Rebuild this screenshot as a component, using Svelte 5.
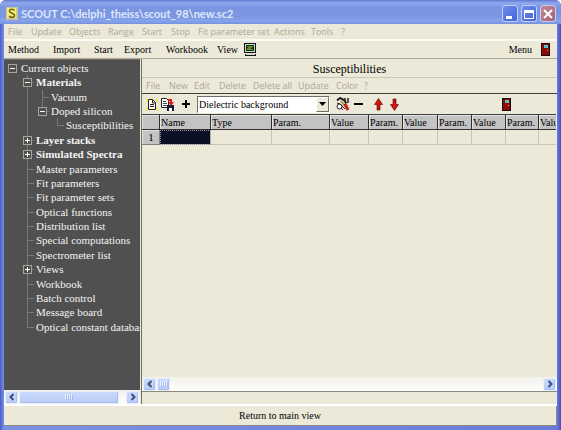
<script>
  const fullTitle = 'SCOUT C:\\delphi_theiss\\scout_98\\new.sc2';

  const menu = [
    { label: 'File', w: 23 },
    { label: 'Update', w: 38 },
    { label: 'Objects', w: 39 },
    { label: 'Range', w: 34 },
    { label: 'Start', w: 29 },
    { label: 'Stop', w: 27 },
    { label: 'Fit parameter set', w: 76 },
    { label: 'Actions', w: 37 },
    { label: 'Tools', w: 30 },
    { label: '?', w: 12 }
  ];
  const actions = [
    { label: 'Method', w: 45 },
    { label: 'Import', w: 41 },
    { label: 'Start', w: 30 },
    { label: 'Export', w: 42 },
    { label: 'Workbook', w: 51 },
    { label: 'View', w: 27 }
  ];
  const subMenu = [
    { label: 'File', w: 23 },
    { label: 'New', w: 25 },
    { label: 'Edit', w: 25 },
    { label: 'Delete', w: 34 },
    { label: 'Delete all', w: 45 },
    { label: 'Update', w: 38 },
    { label: 'Color', w: 28 },
    { label: '?', w: 12 }
  ];

  // one guide cell per level: line, tee, elbow or blank
  const tree = [
    { label: 'Current objects', guides: ['blank'], toggle: '-' },
    { label: 'Materials', guides: ['blank', 'tee'], toggle: '-', bold: true },
    { label: 'Vacuum', guides: ['blank', 'line', 'tee'] },
    { label: 'Doped silicon', guides: ['blank', 'line', 'elbow'], toggle: '-' },
    { label: 'Susceptibilities', guides: ['blank', 'line', 'blank', 'elbow'] },
    { label: 'Layer stacks', guides: ['blank', 'tee'], toggle: '+', bold: true },
    { label: 'Simulated Spectra', guides: ['blank', 'tee'], toggle: '+', bold: true },
    { label: 'Master parameters', guides: ['blank', 'tee'] },
    { label: 'Fit parameters', guides: ['blank', 'tee'] },
    { label: 'Fit parameter sets', guides: ['blank', 'tee'] },
    { label: 'Optical functions', guides: ['blank', 'tee'] },
    { label: 'Distribution list', guides: ['blank', 'tee'] },
    { label: 'Special computations', guides: ['blank', 'tee'] },
    { label: 'Spectrometer list', guides: ['blank', 'tee'] },
    { label: 'Views', guides: ['blank', 'tee'], toggle: '+' },
    { label: 'Workbook', guides: ['blank', 'tee'] },
    { label: 'Batch control', guides: ['blank', 'tee'] },
    { label: 'Message board', guides: ['blank', 'tee'] },
    { label: 'Optical constant database', guides: ['blank', 'elbow'] }
  ];

  const columns = [
    { label: 'Name', w: 51 },
    { label: 'Type', w: 61 },
    { label: 'Param.', w: 58 },
    { label: 'Value', w: 39 },
    { label: 'Param.', w: 34 },
    { label: 'Value', w: 35 },
    { label: 'Param.', w: 34 },
    { label: 'Value', w: 34 },
    { label: 'Param.', w: 33 },
    { label: 'Value', w: 34 }
  ];

  let kind = $state('Dielectric background');
</script>

{#snippet menuItems(items)}
  {#each items as item}
    <button disabled style="width: {item.w}px">{item.label}</button>
  {/each}
{/snippet}

{#snippet door()}
  <svg width="10" height="13" viewBox="0 0 10 13" shape-rendering="crispEdges">
    <path fill="#1a0808" d="M0 0h9v13H0z" />
    <path fill="#8e0808" d="M1 1h7v11H1z" />
    <path fill="#50c8c8" d="M3 2h4v3H3z" />
    <path fill="#e8a040" d="M6 7h1v1H6z" />
  </svg>
{/snippet}

{#snippet arrow(dir)}
  <svg width="8" height="8" viewBox="0 0 8 8">
    <path d={dir === 'left' ? 'M5.5 1 2.5 4l3 3' : 'M2.5 1l3 3-3 3'} fill="none" stroke="#3c4f7c" stroke-width="2" />
  </svg>
{/snippet}

{#snippet grip()}
  <svg width="8" height="6" viewBox="0 0 8 6" shape-rendering="crispEdges">
    <path fill="#eef4fe" d="M0 0h1v5H0zM2 0h1v5H2zM4 0h1v5H4zM6 0h1v5H6z" />
    <path fill="#a6bcf0" d="M1 1h1v5H1zM3 1h1v5H3zM5 1h1v5H5zM7 1h1v5H7z" />
  </svg>
{/snippet}

<div class="window">
  <header class="titlebar">
    <svg width="12" height="13" viewBox="0 0 12 13">
      <path fill="#c9c3a0" d="M0 0h12v13H0z" />
      <path fill="#f7ef71" d="M1 1h9v10H1z" />
      <path d="M8.5 3.5C7 1.5 3.5 2 3.5 4.2c0 2.3 5 1.8 5 4.2 0 2.3-4 2.6-5.5.6" fill="none" stroke="#735f23" stroke-width="1.6" />
    </svg>
    <h1>{fullTitle}</h1>
    <div class="caption-buttons">
      <button aria-label="Minimize">
        <svg width="14" height="14" viewBox="0 0 14 14"><path fill="#fff" d="M3 9h6v3H3z" /></svg>
      </button>
      <button aria-label="Maximize">
        <svg width="14" height="14" viewBox="0 0 14 14"><path fill="#fff" fill-rule="evenodd" d="M2 3h10v9H2zM3 6v5h8V6z" /></svg>
      </button>
      <button class="close" aria-label="Close">
        <svg width="14" height="14" viewBox="0 0 14 14"><path stroke="#fff" stroke-width="2" d="M3 3l8 8M11 3l-8 8" /></svg>
      </button>
    </div>
  </header>

  <div class="client">
    <nav class="menubar">{@render menuItems(menu)}</nav>

    <div class="toolbar">
      {#each actions as action}
        <button style="width: {action.w}px">{action.label}</button>
      {/each}
      <button aria-label="Display">
        <svg width="13" height="13" viewBox="0 0 13 13" shape-rendering="crispEdges">
          <path fill="#111" d="M0 0h12v10H0zM1 11h11v2H1z" />
          <path fill="#d9d9cd" d="M1 1h10v8H1zM3 10h6v1H3zM2 11h9v1H2z" />
          <path fill="#0c300c" d="M2 2h8v6H2z" />
          <path fill="#2bb52b" d="M3 3h6v1H3zM3 6h6v1H3z" />
          <path fill="#b45b2b" d="M4 4h4v1H4zM3 5h4v1H3z" />
        </svg>
      </button>
      <button class="menu-button">Menu</button>
      <button aria-label="Exit">{@render door()}</button>
    </div>

    <main>
      <aside>
        <ul class="tree">
          {#each tree as node}
            <li class:bold={node.bold}>
              {#each node.guides as guide, i}
                <span class="guide {guide}">
                  {#if node.toggle && i === node.guides.length - 1}
                    <button class="toggle" aria-label="Toggle {node.label}">
                      <svg width="9" height="9" viewBox="0 0 9 9" shape-rendering="crispEdges">
                        <path fill="#a8a598" d="M0 0h9v9H0z" />
                        <path fill="#505050" d="M1 1h7v7H1z" />
                        <path fill="#fff" d={node.toggle === '+' ? 'M2 4h5v1H2zM4 2h1v5H4z' : 'M2 4h5v1H2z'} />
                      </svg>
                    </button>
                  {/if}
                </span>
              {/each}
              <span>{node.label}</span>
            </li>
          {/each}
        </ul>
        <div class="scrollbar">
          <button aria-label="Scroll left">{@render arrow('left')}</button>
          <div class="track"><div class="thumb wide">{@render grip()}</div></div>
          <button aria-label="Scroll right">{@render arrow('right')}</button>
        </div>
      </aside>

      <section>
        <h2>Susceptibilities</h2>
        <nav class="menubar sub">{@render menuItems(subMenu)}</nav>
        <div class="tools">
          <div class="group">
            <button aria-label="New">
              <svg width="12" height="13" viewBox="0 0 12 13">
                <path stroke="#f0e850" stroke-width="2" d="M0 1l3 3M12 1 9 4M0 12l3-3M12 12l-2-2M6 0v3" />
                <path fill="#fffef0" stroke="#222" d="M2.5 1.5h4l3 3v7h-7z" />
                <path stroke="#222" d="M4 6.5h4M4 8.5h4M6.5 2v3h3" fill="none" />
              </svg>
            </button>
            <button aria-label="Save">
              <svg width="14" height="13" viewBox="0 0 14 13">
                <path fill="#fff" stroke="#222" d="M.5.5h5l2 2v7h-7z" />
                <path stroke="#444" d="M2 3.5h3M2 5.5h4M2 7.5h4" />
                <path fill="#1a1a3a" d="M6 7h7v6H6z" />
                <path fill="#fff" d="M8 10h3v3H8z" />
                <path fill="#e01818" d="M7 1h4v3h2l-3 4-3-4h2V3H7z" />
              </svg>
            </button>
          </div>
          <button aria-label="Add">
            <svg width="10" height="10" viewBox="0 0 10 10"><path fill="#000" d="M4 1h2v3h3v2H6v3H4V6H1V4h3z" /></svg>
          </button>
          <div class="combo">
            <select bind:value={kind} aria-label="Susceptibility type">
              <option>Dielectric background</option>
            </select>
            <span class="drop">
              <svg width="7" height="4" viewBox="0 0 7 4"><path d="M0 0h7L3.5 4z" /></svg>
            </span>
          </div>
          <div class="group">
            <button aria-label="Edit">
              <svg width="14" height="14" viewBox="0 0 14 14">
                <path d="M1 3.5 4 1l4 2 2 3" fill="none" stroke="#222" stroke-width="2" />
                <path d="M9 1v4M12 1v5" stroke="#222" stroke-width="1.5" />
                <path d="M5 4 9 9" stroke="#b09a30" stroke-width="2" />
                <circle cx="3.5" cy="9.5" r="2.5" fill="#fff" stroke="#222" />
                <path d="M5 8l4 4M5 11l2 2M11 5l-3 3M1 6l3 1" fill="none" stroke="#222" />
                <path d="M9 7l3 6" stroke="#d41818" stroke-width="3" />
              </svg>
            </button>
            <button aria-label="Remove">
              <svg width="10" height="10" viewBox="0 0 10 10"><path fill="#000" d="M1 4h9v2H1z" /></svg>
            </button>
          </div>
          <div class="group arrows">
            <button aria-label="Move up">
              <svg width="9" height="13" viewBox="0 0 9 13"><path fill="#e01010" stroke="#400" stroke-width=".6" d="M4.500 .5 8.500 6.500H6V12H3V6.500H.5z" /></svg>
            </button>
            <button aria-label="Move down">
              <svg width="9" height="13" viewBox="0 0 9 13"><path fill="#e01010" stroke="#400" stroke-width=".6" d="M4.500 12.500 8.500 6.500H6V1H3v5.500H.5z" /></svg>
            </button>
          </div>
          <button class="leave" aria-label="Close list">{@render door()}</button>
        </div>

        <div class="grid">
          <table>
            <colgroup>
              <col style="width: 18px" />
              {#each columns as col}
                <col style="width: {col.w}px" />
              {/each}
            </colgroup>
            <thead>
              <tr>
                <th></th>
                {#each columns as col}
                  <th>{col.label}</th>
                {/each}
              </tr>
            </thead>
            <tbody>
              <tr>
                <th scope="row">1</th>
                {#each columns as col, i}
                  <td class:selected={i === 0}></td>
                {/each}
              </tr>
            </tbody>
          </table>
        </div>
        <div class="scrollbar">
          <button aria-label="Scroll left">{@render arrow('left')}</button>
          <div class="track"><div class="thumb">{@render grip()}</div></div>
          <button aria-label="Scroll right">{@render arrow('right')}</button>
        </div>
        <div class="status"></div>
      </section>
    </main>

    <button class="return">Return to main view</button>
  </div>
</div>

<style>
  :global(body) {
    background: #fff;
  }

  .window {
    box-sizing: border-box;
    display: flex;
    flex-direction: column;
    height: 100vh;
    padding: 0 4px 4px;
    background: linear-gradient(90deg, #4a5ccb, #7b92e4 4px, #6a7bdc calc(100% - 4px), #4450bd);
    border-radius: 6px 6px 0 0;
    font-family: 'Liberation Serif', serif;
    font-size: 10px;
    color: #000;
    overflow: hidden;
  }

  button {
    padding: 0;
    border: 0;
    background: none;
    color: inherit;
    font: inherit;
    text-align: left;
    white-space: nowrap;
    flex: none;
  }

  svg {
    display: block;
  }

  .titlebar {
    display: flex;
    align-items: center;
    gap: 3px;
    height: 24px;
    flex: none;
    margin: 0 -4px;
    padding: 3px 5px 0 6px;
    box-sizing: border-box;
    background: linear-gradient(#6377cf, #90aaf0 3px, #7b95e0 7px, #7b97e2 17px, #86a4ec 21px, #7890dd);
  }

  h1 {
    margin: 0;
    color: #dfe7fb;
    font: 700 11px/16px Lato, sans-serif;
    white-space: nowrap;
  }

  .caption-buttons {
    display: flex;
    gap: 3px;
    margin-left: auto;
  }

  .caption-buttons button {
    width: 16px;
    height: 17px;
    box-sizing: border-box;
    border: 1px solid #c3d0f6;
    border-radius: 3px;
    background: linear-gradient(135deg, #6f90ee, #3e62d8);
  }

  .caption-buttons .close {
    background: linear-gradient(135deg, #c48a9c, #a95e72);
  }

  .client {
    flex: 1;
    display: flex;
    flex-direction: column;
    min-height: 0;
    background: #ece9d8;
  }

  .menubar {
    display: flex;
    align-items: center;
    flex: none;
    height: 15px;
    padding-left: 4px;
    border-bottom: 2px solid #fbfaf5;
    font: 9px 'Open Sans', sans-serif;
    color: #aca899;
  }

  .toolbar {
    display: flex;
    align-items: center;
    flex: none;
    height: 17px;
    padding: 0 6px 0 4px;
    border-bottom: 1px solid #aca899;
  }

  .toolbar .menu-button {
    margin: 0 9px 0 auto;
  }

  main {
    flex: 1;
    display: flex;
    min-height: 0;
    border-bottom: 2px solid #fff;
  }

  aside {
    width: 136px;
    flex: none;
    display: flex;
    flex-direction: column;
    border-top: 1px solid #716f64;
    margin-right: 1px;
  }

  .tree {
    flex: 1;
    display: grid;
    grid-auto-rows: 1fr;
    overflow: hidden;
    margin: 0;
    padding: 1px 0 56px 1px;
    list-style: none;
    background: #505050;
    color: #f4f4f4;
    font-size: 11px;
    line-height: 14px;
  }

  li {
    display: flex;
    white-space: nowrap;
    min-height: 0;
  }

  .bold {
    font-weight: 700;
  }

  .guide {
    display: flex;
    align-items: center;
    justify-content: center;
    flex: none;
    width: 15px;
  }

  .guide:nth-last-child(2) {
    margin-right: 1px;
  }

  .line {
    background: linear-gradient(#7b796e, #7b796e) 7px 0 / 1px 100% no-repeat;
  }

  .tee {
    background:
      linear-gradient(#7b796e, #7b796e) 7px 0 / 1px 100% no-repeat,
      linear-gradient(#7b796e, #7b796e) 7px 7px / 7px 1px no-repeat;
  }

  .elbow {
    background:
      linear-gradient(#7b796e, #7b796e) 7px 0 / 1px 7px no-repeat,
      linear-gradient(#7b796e, #7b796e) 7px 7px / 7px 1px no-repeat;
  }

  section {
    flex: 1;
    display: flex;
    flex-direction: column;
    min-width: 0;
    border-left: 1px solid #716f64;
  }

  h2 {
    margin: 0;
    height: 18px;
    border-bottom: 1px solid #c9c6b6;
    font-size: 12px;
    line-height: 21px;
    font-weight: 400;
    text-align: center;
  }

  .sub {
    border-bottom: 1px solid #404040;
  }

  .tools {
    display: flex;
    align-items: center;
    gap: 6px;
    flex: none;
    height: 20px;
    padding-left: 4px;
  }

  .group {
    display: flex;
    align-items: center;
    gap: 3px;
  }

  .arrows {
    gap: 7px;
    margin-left: 5px;
  }

  .leave {
    margin-left: 97px;
  }

  .combo {
    position: relative;
    width: 133px;
    flex: none;
  }

  select {
    appearance: none;
    display: block;
    box-sizing: border-box;
    width: 100%;
    height: 17px;
    padding: 0 14px 0 1px;
    border: 1px solid #716f64;
    border-right-color: #fff;
    border-bottom-color: #fff;
    border-radius: 0;
    background: #fff;
    color: #000;
    font: inherit;
  }

  .drop {
    position: absolute;
    top: 1px;
    right: 1px;
    bottom: 1px;
    width: 11px;
    display: flex;
    align-items: center;
    justify-content: center;
    border: 1px solid #716f64;
    border-top-color: #fff;
    border-left-color: #fff;
    background: #ece9d8;
    pointer-events: none;
  }

  .grid {
    flex: 1;
    overflow: hidden;
    border-top: 1px solid #404040;
    margin-right: 1px;
  }

  table {
    table-layout: fixed;
    width: 431px;
    border-collapse: separate;
    border-spacing: 0;
  }

  th,
  td {
    box-sizing: border-box;
    height: 15px;
    padding: 0 0 0 1px;
    border-right: 1px solid #c9c6b6;
    border-bottom: 1px solid #c9c6b6;
  }

  th {
    border-right-color: #303030;
    border-bottom-color: #303030;
    background: #c3c3c3;
    box-shadow: inset 1px 1px #e4e4e4;
    font-weight: 400;
    line-height: 13px;
    text-align: left;
    overflow: hidden;
  }

  tbody th {
    border-color: #808080;
    font-size: 11px;
    text-align: center;
  }

  .selected {
    background: #0c1024;
    outline: 1px dotted #8a8fa8;
    outline-offset: -1px;
  }

  .scrollbar {
    display: flex;
    align-items: center;
    flex: none;
    height: 14px;
    padding: 0 1px;
    background: linear-gradient(#f3f1ec, #fefefb);
  }

  .scrollbar button,
  .thumb {
    display: flex;
    align-items: center;
    justify-content: center;
    box-sizing: border-box;
    width: 13px;
    height: 13px;
    border: 1px solid #e6eefc;
    border-radius: 2px;
    background: linear-gradient(#cbdafc, #b9cbf7);
    box-shadow: inset -1px -1px #a9bdf0;
  }

  .track {
    flex: 1;
    padding: 0 1px;
  }

  .thumb.wide {
    width: 94%;
  }

  .status {
    height: 12px;
    border-top: 1px solid #8b897c;
  }

  .return {
    height: 20px;
    border-right: 1px solid #8b897c;
    border-bottom: 1px solid #8b897c;
    box-sizing: border-box;
    text-align: center;
  }
</style>
